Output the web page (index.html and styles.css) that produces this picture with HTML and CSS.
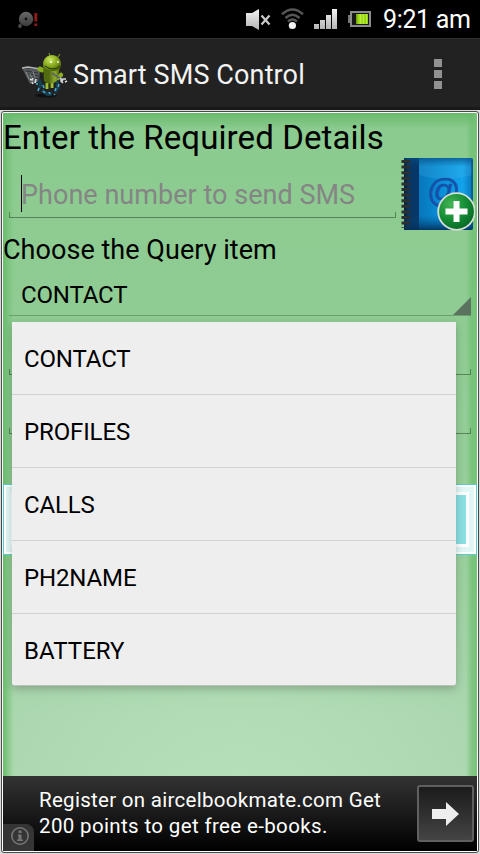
FILE: index.html
```html
<!DOCTYPE html>
<html lang="en">
<head>
<meta charset="utf-8">
<title>Smart SMS Control</title>
<link rel="stylesheet" href="styles.css">
</head>
<body>
<div class="phone">
  <header class="status">
    <svg class="status-disc" width="24" height="22" viewBox="0 0 24 22">
      <defs><linearGradient id="disc" x1="0" y1="0" x2="0" y2="1"><stop offset="0" stop-color="#686868"/><stop offset="1" stop-color="#3c3c3c"/></linearGradient></defs>
      <circle cx="9" cy="9" r="7.2" fill="url(#disc)"/><circle cx="9" cy="9" r="1.4" fill="#111"/><circle cx="3" cy="16" r="1.9" fill="#4a4a4a"/>
      <path d="M17.3 3h3v8.500h-3zM17.300 13.500h3v2.500h-3z" fill="#8c1a1a"/>
    </svg>
    <svg class="status-icons" width="130" height="26" viewBox="244 6 130 26">
      <defs>
        <linearGradient id="sil" x1="0" y1="0" x2="0" y2="1"><stop offset="0" stop-color="#f4f4f4"/><stop offset="1" stop-color="#b4b4b4"/></linearGradient>
        <linearGradient id="bat" x1="0" x2="1"><stop offset="0" stop-color="#6d980f"/><stop offset=".25" stop-color="#a6e51d"/><stop offset="1" stop-color="#8fd010"/></linearGradient>
      </defs>
      <path d="M246 13h6l7-4v21l-7-4h-6z" fill="url(#sil)"/>
      <path d="M261.500 15.500l8 9m0-9l-8 9" stroke="#ccc" stroke-width="2.200" fill="none"/>
      <g fill="none" stroke="#565656" stroke-width="2.500"><path d="M282 14.200q10.500-9.500 21 0"/><path d="M285.500 18q7-6.500 14 0"/><path d="M288 21.500q4.500-4 9 0"/></g>
      <circle cx="292.400" cy="25.500" r="3.600" fill="#f2f2f2"/>
      <path d="M314 24h5v5h-5zM320 20h5v9h-5zM326 15h5v14h-5zM332 9h5v20h-5z" fill="url(#sil)"/>
      <path d="M348 15h3v8h-3z" fill="#777"/>
      <rect x="351" y="12" width="19" height="14" fill="#181818" stroke="#8b8b8b" stroke-width="2"/>
      <path d="M356 14h12v10h-12z" fill="url(#bat)"/><path d="M360.500 14v10m3-10v10m3-10v10" stroke="#d0f560" stroke-width=".6"/>
    </svg>
    <span class="clock">9:21 am</span>
  </header>
  <div class="actionbar">
    <svg class="logo" width="48" height="46" viewBox="0 0 48 46">
      <defs>
        <radialGradient id="andy" cx=".4" cy=".3" r=".8"><stop offset="0" stop-color="#c9e860"/><stop offset=".5" stop-color="#86a81c"/><stop offset="1" stop-color="#3e5606"/></radialGradient>
        <linearGradient id="body" x1="0" x2="1"><stop offset="0" stop-color="#526d0a"/><stop offset=".35" stop-color="#526814"/><stop offset=".7" stop-color="#8fae2a"/><stop offset="1" stop-color="#4b6207"/></linearGradient>
      </defs>
      <ellipse cx="24" cy="41.500" rx="11" ry="2" fill="#111"/>
      <path d="M0 14l18 1-1 13-9 2z" fill="#55595b"/>
      <path d="M0 14l6-1 12 2" stroke="#b2b6b8" stroke-width="1.500" fill="none"/>
      <path d="M4 17l12 2M6 20l11 2M8 23l9 2" stroke="#303437" stroke-width="1"/>
      <path d="M4 18l3 7m4-8l2 7m-5-4l2 4" stroke="#858a8d" stroke-width="1"/>
      <path d="M8 25l2 1 1-2m3 1l-1 4m-3-1l1 2" stroke="#dadddf" stroke-width="1.600"/>
      <path d="M17 26l2 5-2 3m18-7l1 7-3 4m-13-2l5 4 5 0" fill="none" stroke="#163f50" stroke-width="3.500"/>
      <path d="M15 29v2m2 3l-1 3m5-6l1 3m-1 3l2 2m4-1l1 2m4 0l1 1m1-7l-1 3m4-7l-1 3" stroke="#48a9d0" stroke-width="1.600"/>
      <path d="M25 29v6m5-7v6" stroke="#9fbe35" stroke-width="3"/>
      <path d="M27.500 29v6" stroke="#27360a" stroke-width="1.500"/>
      <path d="M20 16l-2-1" stroke="#85ad20" stroke-width="5" stroke-linecap="round"/>
      <path d="M36 24l3-3" stroke="#8cb022" stroke-width="4.500" stroke-linecap="round"/>
      <path d="M21 11q8 9 17 2l-3 14q-8 5-13 0z" fill="url(#body)"/>
      <path d="M21 10c0-5 4-9 9-9s9 4 9 9-3 7-8 7-10-2-10-7z" fill="url(#andy)"/>
      <path d="M23 12q8 6 15 0" stroke="#263502" stroke-width="1" fill="none"/>
      <path d="M28 2l-1-3M36 3l2-3" stroke="#8aac25"/>
      <circle cx="29" cy="8" r="1.100" fill="#fff"/><circle cx="36" cy="8" r=".9" fill="#fff"/>
      <path d="M30 19l9 6" stroke="#60656a" stroke-width="2"/>
      <path d="M38 24l3 3m3-2l-3 0-2 2 2 2m4-2l-2 1" stroke="#d6d8d9" stroke-width="1.700" fill="none"/>
    </svg>
    <h1 class="app-title">Smart SMS Control</h1>
    <div class="overflow"><i></i><i></i><i></i></div>
  </div>
  <main class="frame">
    <div class="panel">
      <h2 class="heading">Enter the Required Details</h2>
      <div class="phone-row">
        <div class="field phone-field"><span class="caret"></span><span class="hint">Phone number to send SMS</span></div>
        <svg class="book" width="75" height="74" viewBox="0 0 75 74">
          <defs>
            <linearGradient id="cover" x1="0" y1="0" x2="1" y2="0"><stop offset="0" stop-color="#0668a8"/><stop offset=".5" stop-color="#088bd4"/><stop offset=".85" stop-color="#12a3ea"/><stop offset="1" stop-color="#0873b8"/></linearGradient>
            <linearGradient id="spine" x1="0" x2="1"><stop offset="0" stop-color="#06203d"/><stop offset=".3" stop-color="#063764"/><stop offset="1" stop-color="#07376a"/></linearGradient>
            <linearGradient id="edge" x1="0" y1="0" x2="0" y2="1"><stop offset="0" stop-color="#044d82" stop-opacity=".7"/><stop offset=".12" stop-color="#044d82" stop-opacity="0"/><stop offset=".8" stop-color="#044d82" stop-opacity="0"/><stop offset="1" stop-color="#032d58" stop-opacity=".9"/></linearGradient>
            <radialGradient id="plus" cx=".35" cy=".3" r=".8"><stop offset="0" stop-color="#43b554"/><stop offset=".5" stop-color="#158e35"/><stop offset="1" stop-color="#046222"/></radialGradient>
          </defs>
          <rect x="4" y="1" width="69" height="72" rx="2" fill="url(#cover)"/>
          <path d="M19 1h53v17q-27 8-53 0z" fill="#5dc4f0" opacity=".18"/>
          <path d="M4 1h15v72H4z" fill="url(#spine)"/>
          <rect x="4" y="1" width="69" height="72" rx="2" fill="url(#edge)"/>
          <path d="M72 3v68" stroke="#064a80" stroke-width="1.500" opacity=".7"/>
          <path d="M6 3v68" stroke="#2c2f30" stroke-width="9" stroke-dasharray="3 2.600"/>
          <text class="at" x="27" y="45">@</text>
          <circle cx="56.500" cy="54.500" r="18.300" fill="url(#plus)" stroke="#d6dfd7" stroke-width="1.800"/>
          <path d="M53.500 44h6v7.500h8v6h-8v7.500h-6v-7.500h-8v-6h8z" fill="#fff"/>
        </svg>
      </div>
      <div class="label">Choose the Query item</div>
      <div class="spinner"><span>CONTACT</span><b class="corner"></b></div>
      <div class="field blank"></div>
      <div class="field blank"></div>
      <div class="send"><div class="send-mid"><div class="send-core"></div></div></div>
      <footer class="ad">
        <div class="info"><svg width="20" height="20" viewBox="0 0 20 20"><circle cx="10" cy="10" r="8.200" fill="none" stroke="#767676" stroke-width="1.600"/><path d="M8.500 4.500h3v2.500h-3zM8 8.500h3.500v5H13V15H7v-1.500h1.500v-3.500H8z" fill="#767676"/></svg></div>
        <p class="ad-text"><span class="line-one">Register on aircelbookmate.com Get</span><br><span class="line-two">200 points to get free e-books.</span></p>
        <div class="go"><svg width="28" height="24" viewBox="0 0 28 24"><path d="M0 7h14V0l13 12-13 12v-7H0z" fill="#eee"/></svg></div>
      </footer>
      <ul class="menu">
        <li>CONTACT</li>
        <li>PROFILES</li>
        <li>CALLS</li>
        <li>PH2NAME</li>
        <li class="last">BATTERY</li>
      </ul>
    </div>
  </main>
</div>
</body>
</html>
```
FILE: styles.css
```css
* { box-sizing: border-box; }
body { margin: 0; background: #000; font-family: Roboto, "Liberation Sans", sans-serif; color: #000; }
h1, h2, p, ul { margin: 0; padding: 0; font-weight: 400; }
span { white-space: nowrap; }
.phone { width: 480px; height: 854px; display: flex; flex-direction: column; overflow: hidden; }
.status { height: 38px; display: flex; align-items: flex-start; background: #000; padding: 6px 0 0 17px; }
.status-disc { margin-top: 4px; }
.status-icons { margin-left: 203px; }
.clock { margin-left: 9px; color: #fff; font-size: 25px; line-height: 28px; letter-spacing: -.35px; }
.actionbar { height: 72px; display: flex; align-items: flex-start; background: #222; border-top: 1px solid #303030; border-bottom: 3px solid #191919; padding: 15px 38px 0 22px; }
.logo { flex: none; overflow: visible; }
.app-title { margin-left: 3px; font-size: 27px; line-height: 42px; letter-spacing: .13px; color: #f3f3f3; white-space: nowrap; }
.overflow { margin-left: auto; padding-top: 5px; display: grid; gap: 3px; }
.overflow i { width: 8px; height: 8px; background: #929292; }
.frame { height: 744px; background: #d9d9d9; padding: 1px; }
.panel {
  position: relative; height: 742px; display: flex; flex-direction: column;
  border: 1px solid #4a4a4a; border-radius: 3px;
  box-shadow: inset 0 0 0 1px #fff; padding: 1px;
  background:
    linear-gradient(90deg, #fff 1px, #69bc6c 1px, rgba(105,188,108,.6) 5px, rgba(105,188,108,0) 12px, rgba(105,188,108,0) 464px, rgba(105,188,108,.65) 470px, #77c479 475px, #fff 475px),
    linear-gradient(180deg, #fff 1px, #68b96b 1px, rgba(104,185,107,0) 17px),
    linear-gradient(180deg, #8bcb8f 0, #90cc94 220px, #9bd09e 450px, rgba(172,214,176,0) 600px),
    radial-gradient(circle at 50% 100%, #b9e2bb 0, #a9d5ad 300px);
}
.heading { height: 45px; font-size: 33px; line-height: 49px; letter-spacing: .1px; white-space: nowrap; }
.phone-row { height: 74px; display: flex; }
.field { border: 1px solid rgba(40,75,42,.55); border-top: 0; height: 6px; }
.phone-field { width: 387px; height: 47px; margin: 13px 4px 0 6px; display: flex; align-items: flex-start; border-left: 0; border-right: 0; position: relative; }
.phone-field::after { content: ""; position: absolute; left: 0; right: 0; bottom: 0; height: 5px; border: 1px solid rgba(40,75,42,.55); border-width: 0 1px; }
.caret { width: 1px; height: 37px; margin: 4px 0 0 12px; background: #000; }
.hint { margin-left: -1px; font-size: 27px; line-height: 49px; letter-spacing: .03px; color: #858585; }
.book { flex: none; margin-top: -1px; }
.at { font: 33px "Liberation Sans", sans-serif; fill: #1650a9; stroke: #1650a9; stroke-width: .6px; }
.label { height: 37px; font-size: 27px; line-height: 36px; letter-spacing: .04px; }
.spinner { height: 47px; margin: 0 6px; padding-left: 12px; border-bottom: 1px solid rgba(40,75,42,.35); display: flex; font-size: 24px; line-height: 52px; letter-spacing: -.15px; }
.corner { width: 18px; height: 18px; margin: 28px 0 0 auto; background: #5b735e; clip-path: polygon(100% 0, 100% 100%, 0 100%); }
.blank { margin: 53px 6px 0; }
.send { height: 71px; margin-top: 50px; padding: 2px; border: 1px solid #59cfd2; background: #fff; }
.send-mid { height: 100%; padding: 5px; background: #e0f7f5; }
.send-core { height: 100%; border: 3px solid #fff; background: #8bdee1; }
.ad { height: 75px; margin-top: auto; display: flex; background: linear-gradient(#333, #000); }
.info { width: 31px; height: 27px; align-self: flex-end; padding: 2px 0 0 7px; background: #353535; border-top-right-radius: 8px; }
.ad-text { flex: 1; margin-left: 5px; padding-top: 11px; font-size: 20.500px; line-height: 26px; color: #fff; }
.line-one { letter-spacing: .29px; }
.line-two { letter-spacing: .36px; }
.go { width: 57px; height: 57px; margin: 9px 3px 0 0; display: grid; place-items: center; border: 2px solid #606060; border-radius: 3px; background: linear-gradient(#1b1b1b, #444); }
.menu { position: absolute; left: 10px; top: 210px; width: 444px; height: 364px; list-style: none; background: #eee; border-radius: 0 0 3px 3px; border-bottom: 1px solid #b9c1b9; box-shadow: 0 3px 9px rgba(0,0,0,.22); }
.menu li { height: 73px; padding-left: 12px; border-bottom: 1px solid #d2d2d2; font-size: 24px; line-height: 74px; letter-spacing: -.13px; }
.menu .last { border: 0; height: 71px; letter-spacing: .05px; }
```
